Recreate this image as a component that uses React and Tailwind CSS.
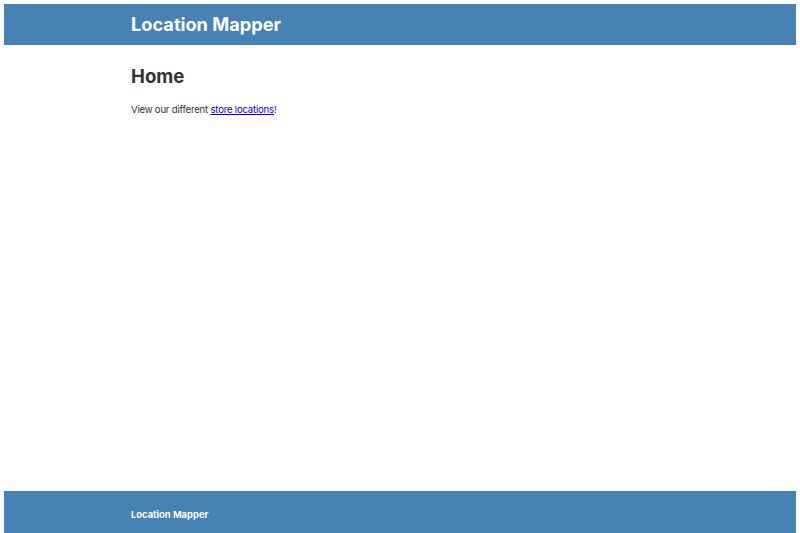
export default function App() {
  return (
    <div className="h-[533px] flex flex-col px-1 pt-1 bg-white font-['Inter',sans-serif]">
      <header className="h-[40.5px] bg-[#4682b4] pl-[127px] flex items-center">
        <h1 className="text-[18.2px] font-bold text-white">Location Mapper</h1>
      </header>

      <main className="flex-1 pl-[127px] pt-5">
        <h2 className="text-[18.6px] font-bold leading-[23px] text-[#333]">Home</h2>
        <p className="mt-[15px] text-[9.6px] tracking-[-0.21px] leading-[14px] text-[#333]">
          View our different{' '}
          <a href="#" className="text-[#0000ee] underline">store locations</a>!
        </p>
      </main>

      <footer className="h-[42px] bg-[#4682b4] pl-[127px] pt-[6px] flex items-center">
        <span className="text-[9.4px] font-bold text-white">Location Mapper</span>
      </footer>
    </div>
  );
}
